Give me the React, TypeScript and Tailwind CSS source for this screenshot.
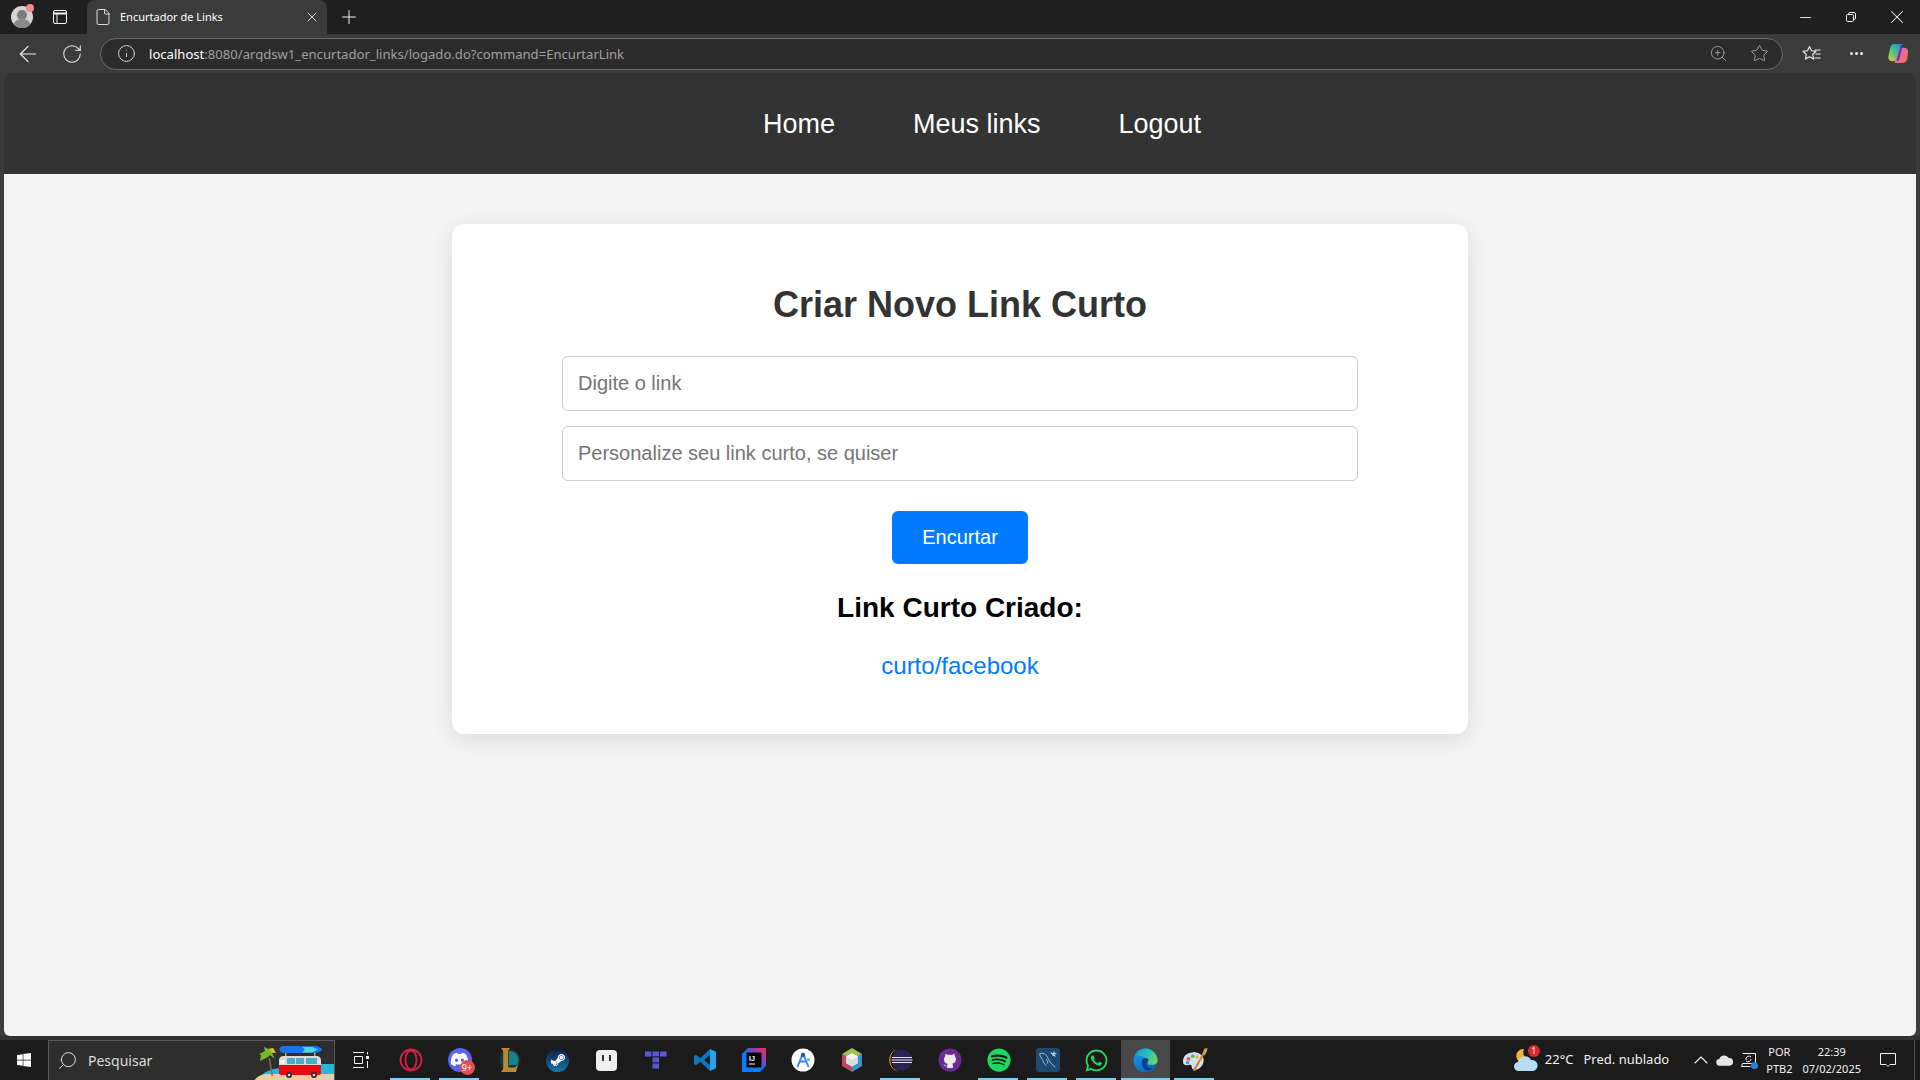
import { ArrowLeft, ChevronUp, File, Info, Minus, Plus, RotateCw, Search, Star, X, ZoomIn } from "lucide-react";
import { FaDiscord, FaSpotify, FaSteamSymbol, FaWhatsapp, FaWindows } from "react-icons/fa";

function Avatar() {
  return (
    <div className="relative h-[22px] w-[22px]">
      <svg viewBox="0 0 22 22" className="h-[22px] w-[22px]">
        <circle cx="11" cy="11" r="11" fill="#d4d4d4" />
        <circle cx="11" cy="9" r="5" fill="#7d7d7d" />
        <path d="M2.5 18c2-4 5-5 8.500-5s6.500 1 8.500 5a11 11 0 0 1-17 0z" fill="#8a8a8a" />
      </svg>
      <span className="absolute -right-[1px] -top-[2px] h-[8px] w-[8px] rounded-full bg-[#f28b8b]" />
    </div>
  );
}

function TabsIcon() {
  return (
    <svg viewBox="0 0 14 14" className="h-[14px] w-[14px]" fill="none" stroke="#f2f2f2" strokeWidth="1">
      <rect x="0.5" y="0.5" width="13" height="13" rx="1.5" />
      <path d="M0.5 3.500h13" strokeWidth="2" />
      <path d="M4 4v9.500" />
    </svg>
  );
}

function RestoreIcon() {
  return (
    <svg viewBox="0 0 10 10" className="h-[10px] w-[10px]" fill="none" stroke="#f2f2f2" strokeWidth="1">
      <rect x="0.5" y="2.500" width="7" height="7" rx="1.2" />
      <path d="M2.500 2.500V1.800c0-.7.5-1.300 1.300-1.300h4.400c.7 0 1.300.6 1.300 1.300v4.400c0 .7-.6 1.300-1.300 1.300h-.7" />
    </svg>
  );
}

function FavoritesIcon() {
  return (
    <svg viewBox="0 0 20 18" className="h-[18px] w-[20px]" fill="none" stroke="#f2f2f2" strokeWidth="1.100" strokeLinejoin="round">
      <path d="M7.500 1.500l2 4.300 4.500.6-3.300 3.100.9 4.600-4.100-2.300-4 2.300.8-4.600L1 6.400l4.500-.6z" />
      <path d="M12.500 5h6M13.500 9h5M12.500 13h6" />
    </svg>
  );
}

function CopilotIcon() {
  return (
    <svg viewBox="0 0 24 24" className="h-[23px] w-[23px]">
      <defs>
        <linearGradient id="copA" x1="0" y1="1" x2="1" y2="0">
          <stop offset="0" stopColor="#f5c13b" />
          <stop offset="0.5" stopColor="#3fc28d" />
          <stop offset="1" stopColor="#1f7fe0" />
        </linearGradient>
        <linearGradient id="copB" x1="0" y1="0" x2="1" y2="1">
          <stop offset="0" stopColor="#c665e0" />
          <stop offset="0.5" stopColor="#f0689a" />
          <stop offset="1" stopColor="#f4743c" />
        </linearGradient>
      </defs>
      <path d="M8 2h8l-4 18H6c-3 0-5-2-4.500-5L3 7c.5-3 2.500-5 5-5z" fill="url(#copA)" />
      <path d="M12 6h6c2.500 0 4 2 4 4.500l-.8 6.500c-.4 3-2.700 5-5.200 5H8l4-16z" fill="url(#copB)" />
      <path d="M14 3.500h2.500l-4 16H10z" fill="#1a3f8f" opacity="0.75" />
    </svg>
  );
}

function Opera() {
  return (
    <svg viewBox="0 0 24 24" className="h-[24px] w-[24px]" fill="none" stroke="#d4224a" strokeWidth="1.800">
      <circle cx="12" cy="12" r="10.500" />
      <ellipse cx="12" cy="12" rx="5.500" ry="9.500" />
    </svg>
  );
}

function Discord() {
  return (
    <div className="relative h-[24px] w-[24px] rounded-full bg-[#5865f2]">
      <FaDiscord className="absolute left-[2px] top-[2px] h-[19px] w-[19px] text-white" />
      <span className="absolute -bottom-[3px] -right-[3px] flex h-[15px] w-[15px] items-center justify-center rounded-full bg-[#e25050] font-['Noto_Sans',sans-serif] text-[9px] leading-none text-white">
        9+
      </span>
    </div>
  );
}

function Lol() {
  return (
    <svg viewBox="0 0 24 26" className="h-[26px] w-[24px]">
      <circle cx="13" cy="13" r="10.500" fill="#0b3a44" stroke="#2a2a1c" strokeWidth="1" />
      <path d="M12 4a9 9 0 0 1 8 14h-8z" fill="#1b7e88" />
      <path d="M4 1h9l-1.800 2.500v17h6.500l3.300-2.500-2 7H4l2.200-3V4z" fill="#b98a32" />
    </svg>
  );
}

function Steam() {
  return (
    <div className="flex h-[23px] w-[23px] items-center justify-center rounded-full bg-gradient-to-b from-[#0d1f45] to-[#1177b0]">
      <FaSteamSymbol className="h-[16px] w-[16px] text-white" />
    </div>
  );
}

function Pixel() {
  return (
    <div className="flex h-[21px] w-[21px] items-start justify-center gap-[5px] rounded-[4px] bg-[#f0f0f0] pt-[5px]">
      <span className="h-[6px] w-[2px] bg-[#333]" />
      <span className="h-[6px] w-[2px] bg-[#333]" />
    </div>
  );
}

function Tetris() {
  return (
    <svg viewBox="0 0 24 24" className="h-[24px] w-[24px]" fill="#5b57c9" stroke="#15132b" strokeWidth="0.800">
      <rect x="0.500" y="3" width="7.500" height="6" />
      <rect x="8" y="3" width="7.500" height="6" />
      <rect x="15.500" y="3" width="7.500" height="6" />
      <rect x="8" y="9" width="7.500" height="6" />
      <rect x="8" y="15" width="7.500" height="6" />
    </svg>
  );
}

function VsCode() {
  return (
    <svg viewBox="0 0 24 24" className="h-[24px] w-[24px]">
      <path d="M17 1l6 2.800v16.400L17 23z" fill="#24a2ee" />
      <path d="M17 1L7.500 10.300 3 6.800 1 8v8l2 1.200 4.500-3.500L17 23v-6l-6-5 6-5z" fill="#0a78c4" />
    </svg>
  );
}

function Idea() {
  return (
    <svg viewBox="0 0 24 24" className="h-[24px] w-[24px]">
      <defs>
        <linearGradient id="ijBg" x1="0" y1="1" x2="1" y2="0">
          <stop offset="0.450" stopColor="#087cfa" />
          <stop offset="0.700" stopColor="#8a3fb8" />
          <stop offset="1" stopColor="#fe2857" />
        </linearGradient>
      </defs>
      <path d="M6 0h18v18l-6 6H0V6z" fill="url(#ijBg)" />
      <rect x="4.500" y="4.500" width="15" height="15" fill="#000" />
      <text x="7" y="12.500" fontSize="7" fontWeight="700" fontFamily="Liberation Sans, sans-serif" fill="#fff">IJ</text>
      <rect x="7" y="15.500" width="6" height="1" fill="#fff" />
    </svg>
  );
}

function AndroidStudio() {
  return (
    <svg viewBox="0 0 24 24" className="h-[24px] w-[24px]">
      <circle cx="12" cy="12" r="11.500" fill="#fff" />
      <path d="M12 5l-5.500 14M12 5l5.500 14M8 13.500h8" fill="none" stroke="#4285f4" strokeWidth="2" />
      <circle cx="12" cy="7" r="2.200" fill="#1a56c4" />
      <circle cx="17.500" cy="11.500" r="1.500" fill="#3ddc84" />
    </svg>
  );
}

function NetBeans() {
  return (
    <svg viewBox="0 0 24 24" className="h-[24px] w-[24px]">
      <path d="M12 0l10 6-10 6-10-6z" fill="#a3c14a" />
      <path d="M2 6l10 6v12L2 18z" fill="#c04a60" />
      <path d="M22 6l-10 6v12l10-6z" fill="#3d8fd0" />
      <path d="M12 5l6 3.500v6.500l-6 3.500-6-3.500V8.500z" fill="#f4f4f4" />
      <path d="M6 8.500l6 3.500 6-3.500v6.500l-6 3.500-6-3.500z" fill="#dcdcdc" />
    </svg>
  );
}

function Eclipse() {
  return (
    <svg viewBox="0 0 24 24" className="h-[24px] w-[24px]">
      <path d="M9 0.800a11.500 11.500 0 0 0 0 22.400A12 12 0 0 1 9 0.800z" fill="#f7941e" />
      <circle cx="13" cy="12" r="10.500" fill="#2c2255" />
      <path d="M3 9.500h20M2.500 12h21M3 14.500h20" stroke="#e8e6f2" strokeWidth="1.200" />
    </svg>
  );
}

function GitHub() {
  return (
    <svg viewBox="0 0 24 24" className="h-[24px] w-[24px]">
      <circle cx="12" cy="12" r="11.500" fill="#6a2c91" />
      <path
        d="M7.600 5.600l2.400 1.300a8 8 0 0 1 4 0l2.400-1.300.6 3c.8 1 1.100 2 1 3.100-.2 2.400-1.800 3.600-3.800 3.900.5.500.7 1.100.7 1.800V20h-5.800v-1.800c-1.900.4-2.900-.3-3.600-1.900.5 0 1.300.5 1.700 1.100.5.500 1.100.5 1.900.3 0-.7.200-1.300.7-1.900-2-.3-3.600-1.500-3.800-3.900-.1-1.100.2-2.100 1-3.100z"
        fill="#ececec"
      />
    </svg>
  );
}

function MySql() {
  return (
    <div className="flex h-[24px] w-[24px] items-center justify-center rounded-[3px] bg-[#1f4a70]">
      <svg viewBox="0 0 24 24" className="h-[22px] w-[22px]" fill="none" stroke="#d5e0ea" strokeWidth="0.800">
        <path d="M3 5c3-1 6 0 8 3 1 2 1.500 4 3 6 1.500 2 3.500 3.500 6 6" />
        <path d="M3 5c0 3 1.500 5 3 6.500.8 1 .5 2.500 1.500 4 .6 1 2 1.500 3 3" />
        <path d="M10 11c1.500 1.500 1.800 3 1.500 5" />
        <path d="M15 4l5 4M19 3l-2 4M21 5l-4 1" strokeWidth="1.200" />
      </svg>
    </div>
  );
}

function Edge() {
  return (
    <svg viewBox="0 0 24 24" className="h-[25px] w-[25px]">
      <defs>
        <linearGradient id="edgeTop" x1="0" y1="0.200" x2="1" y2="0.700">
          <stop offset="0" stopColor="#1a9de0" />
          <stop offset="0.550" stopColor="#2ec4b0" />
          <stop offset="1" stopColor="#6bdb4f" />
        </linearGradient>
        <linearGradient id="edgeLow" x1="0" y1="0" x2="0.700" y2="1">
          <stop offset="0" stopColor="#14a0e8" />
          <stop offset="1" stopColor="#0b62bd" />
        </linearGradient>
      </defs>
      <circle cx="12" cy="12" r="11.500" fill="url(#edgeLow)" />
      <path d="M2 7C4 2.500 8 .5 12 .5 18.500.5 23.500 6 23.500 12c0 2-1 3.500-3.500 4-2.500.4-5 0-6-1 1.200-1.500.8-4-1.500-5.500C9 7.500 4.500 7.500 2 7z" fill="url(#edgeTop)" />
      <path d="M8.500 13c0-2 1.500-3.500 4-3.500 1.500 0 2.500 1 2.500 2.500-1 .5-2 1.500-2 3 0 2.500 2.500 4.500 6 4.500-1.500 1.500-3 2-5 2-3.500 0-5.500-4-5.500-8.500z" fill="#0d3f8e" />
    </svg>
  );
}

function Palette() {
  return (
    <svg viewBox="0 0 24 24" className="h-[26px] w-[26px]">
      <path d="M10 5C4 5 0.500 9 1 14c.3 3 3 3 5 2.500 2-.5 3 0 3 2 0 2 2 3 4 2.500 4-1 7-4.500 7-9 0-4-4-7.500-10-7.500z" fill="#cfe3f2" />
      <circle cx="6" cy="11" r="1.800" fill="#e25b5b" />
      <circle cx="10" cy="8.500" r="1.700" fill="#5db85b" />
      <circle cx="14" cy="9" r="1.500" fill="#e8a93a" />
      <circle cx="5" cy="14.500" r="1.500" fill="#4a90d9" />
      <path d="M11 22L20.500 5" stroke="#d9822b" strokeWidth="2" />
      <path d="M19 6l1.500-4.500L23.500 1l-.5 3-2 3.500z" fill="#c9a15a" />
    </svg>
  );
}

function BeachVan() {
  return (
    <svg viewBox="0 0 80 40" className="h-[40px] w-[80px] shrink-0">
      <rect x="60" y="23" width="20" height="12" fill="#24b6dc" />
      <path d="M8 34c4-4 10-6 18-7v8H8z" fill="#24b6dc" />
      <path d="M0 40c3-5 8-7 14-7h66v7z" fill="#e6cfa0" />
      <path d="M16 17l3 18h-1.500L14.500 17z" fill="#8a6a4a" />
      <path d="M14 16L6 20l1-6-2-1 6-3-1-4 5 2 4-1 3 5-4 0 3 6-5-4z" fill="#76b82a" />
      <path d="M15 8l4-1 3 5-5-1z" fill="#e3b42c" />
      <path d="M30 5h16v7H30c-3 0-4.500-1.500-4.500-3.500S27 5 30 5z" fill="#1976e0" />
      <path d="M46 5h14c4 0 8 2 8 3.500S64 12 60 12H46z" fill="#1976e0" />
      <path d="M48 6h10l6 2.500-6 3H48l3-3z" fill="#54d6d2" />
      <rect x="31" y="12" width="1.500" height="3" fill="#a8a8a8" />
      <rect x="60" y="12" width="1.500" height="3" fill="#a8a8a8" />
      <path d="M29 15h34c2 0 4 2 4 4v6H25v-6c0-2 2-4 4-4z" fill="#dcdcdc" />
      <path d="M25 24h42v8c0 1-1 2-2 2H27c-1 0-2-1-2-2z" fill="#e30d13" />
      <rect x="26" y="19" width="5" height="4" fill="#f0f0f0" />
      <rect x="33" y="17" width="8" height="6" fill="#49afc9" />
      <rect x="42" y="17" width="8" height="6" fill="#49afc9" />
      <rect x="52" y="17" width="11" height="6" fill="#49afc9" />
      <circle cx="35" cy="34" r="3" fill="#2a2a2a" />
      <circle cx="35" cy="34" r="1.300" fill="#ddd" />
      <circle cx="60" cy="34" r="3" fill="#2a2a2a" />
      <circle cx="60" cy="34" r="1.300" fill="#ddd" />
    </svg>
  );
}

function TaskView() {
  return (
    <svg viewBox="0 0 16 16" className="h-[16px] w-[16px]" fill="none" stroke="#f2f2f2" strokeWidth="1">
      <path d="M0 0.500h11M0 15.500h11M1.500 4.500h8v7h-8z" />
      <rect x="13" y="4" width="3" height="3" fill="#f2f2f2" stroke="none" />
      <path d="M14.500 0v2.500M14.500 9v7" />
    </svg>
  );
}

function Weather() {
  return (
    <div className="relative h-[26px] w-[26px]">
      <svg viewBox="0 0 26 26" className="h-[26px] w-[26px]">
        <path d="M11 2a7 7 0 1 0 5 11 8 8 0 0 1-5-11z" fill="#f0b13e" />
        <path d="M6 24a4.500 4.500 0 0 1-1-9 7 7 0 0 1 13-2 5.500 5.500 0 0 1 2 11z" fill="#b9dcf5" />
      </svg>
      <span className="absolute -right-[1px] -top-[2px] flex h-[12px] w-[12px] items-center justify-center rounded-full bg-[#d92b2b] text-[8px] leading-none text-white">
        1
      </span>
    </div>
  );
}

function OneDrive() {
  return (
    <svg viewBox="0 0 18 12" className="h-[12px] w-[17px]" fill="#e6e6e6">
      <path d="M4 12a3.500 3.500 0 0 1-.5-7A5.500 5.500 0 0 1 13.500 4 4 4 0 0 1 14.500 12z" />
    </svg>
  );
}

function NetworkTray() {
  return (
    <div className="relative h-[16px] w-[16px]">
      <svg viewBox="0 0 16 16" className="h-[16px] w-[16px]" fill="none" stroke="#f2f2f2" strokeWidth="1">
        <path d="M2.500 1.500h13v10h-13l-1 3h9" />
        <path d="M6 8a3 3 0 0 1 5-3M11 7a3 3 0 0 1-5 2" />
      </svg>
      <span className="absolute -bottom-[1px] -right-[2px] h-[7px] w-[7px] rounded-full bg-[#2a7fd6]" />
    </div>
  );
}

function NotificationIcon() {
  return (
    <svg viewBox="0 0 16 16" className="h-[16px] w-[16px]" fill="none" stroke="#f2f2f2" strokeWidth="1">
      <path d="M0.500 1.500h15v11H10l-2 2-2-2H0.500z" />
    </svg>
  );
}

function TaskItem({ children, running, active }: { children: React.ReactNode; running?: boolean; active?: boolean }) {
  return (
    <div className={`relative flex h-[40px] w-[49px] items-center justify-center ${active ? "bg-[#484848]" : ""}`}>
      {children}
      {running && (
        <span className={`absolute bottom-0 h-[2px] bg-[#76d0f5] ${active ? "left-0 w-full" : "left-[4px] w-[40px]"}`} />
      )}
    </div>
  );
}

export default function App() {
  return (
    <div className="flex h-screen w-full flex-col overflow-hidden bg-[#3b3b3b] font-['Liberation_Sans',Arial,sans-serif]">
      <div className="flex h-[34px] items-end bg-[#1f1f1f] font-['Noto_Sans',sans-serif]">
        <div className="flex h-[34px] w-[44px] items-center justify-center">
          <Avatar />
        </div>
        <div className="ml-[1px] flex h-[34px] w-[30px] items-center justify-center">
          <TabsIcon />
        </div>
        <div className="ml-[12px] flex h-[34px] w-[240px] items-center rounded-t-[8px] bg-[#3b3b3b] pl-[7px] pr-[7px] text-white">
          <File className="h-[18px] w-[18px] text-[#f0f0f0]" strokeWidth={1.2} />
          <span className="ml-[8px] flex-1 text-[11px]">Encurtador de Links</span>
          <X className="h-[16px] w-[16px] text-[#e6e6e6]" strokeWidth={1.3} />
        </div>
        <div className="ml-[4px] flex h-[34px] w-[36px] items-center justify-center">
          <Plus className="h-[22px] w-[22px] text-[#f0f0f0]" strokeWidth={1.1} />
        </div>
        <div className="ml-auto flex h-[34px] items-center">
          <div className="flex w-[46px] justify-center">
            <Minus className="h-[17px] w-[17px] text-[#f2f2f2]" strokeWidth={1.3} />
          </div>
          <div className="flex w-[46px] justify-center">
            <RestoreIcon />
          </div>
          <div className="flex w-[46px] justify-center">
            <X className="h-[22px] w-[22px] text-[#f2f2f2]" strokeWidth={1.1} />
          </div>
        </div>
      </div>

      <div className="flex h-[39px] items-center bg-[#3b3b3b] font-['Noto_Sans',sans-serif]">
        <div className="flex w-[56px] justify-center">
          <ArrowLeft className="h-[26px] w-[26px] text-[#efefef]" strokeWidth={1.1} />
        </div>
        <div className="flex w-[32px] justify-center">
          <RotateCw className="h-[22px] w-[22px] text-[#efefef]" strokeWidth={1.1} />
        </div>
        <div className="ml-[12px] flex h-[32px] flex-1 items-center rounded-full border border-[#6b6b6b] bg-[#2b2b2b] pl-[16px] pr-[13px]">
          <Info className="h-[19px] w-[19px] text-[#d8d8d8]" strokeWidth={1.2} />
          <span className="ml-[13px] flex-1 pt-[2px] text-[13.1px] text-[#a0a0a0]">
            <span className="text-white">localhost</span>:8080/arqdsw1_encurtador_links/logado.do?command=EncurtarLink
          </span>
          <ZoomIn className="h-[19px] w-[19px] text-[#a0a0a0]" strokeWidth={1.2} />
          <Star className="ml-[22px] h-[19px] w-[19px] text-[#a0a0a0]" strokeWidth={1.2} />
        </div>
        <div className="ml-[16px] flex w-[26px] justify-center">
          <FavoritesIcon />
        </div>
        <div className="ml-[18px] flex w-[26px] items-center justify-center gap-[2px]">
          <span className="h-[3px] w-[3px] rounded-full bg-[#f2f2f2]" />
          <span className="h-[3px] w-[3px] rounded-full bg-[#f2f2f2]" />
          <span className="h-[3px] w-[3px] rounded-full bg-[#f2f2f2]" />
        </div>
        <div className="ml-[17px] mr-[10px] flex w-[24px] justify-center">
          <CopilotIcon />
        </div>
      </div>

      <div className="flex min-h-0 flex-1 flex-col overflow-hidden rounded-t-[6px] px-[4px]">
        <nav className="flex h-[101px] shrink-0 items-center justify-center gap-[78px] rounded-t-[6px] bg-[#333333] pl-[44px] pt-[2px] text-[27px] text-white">
          <a>Home</a>
          <a>Meus links</a>
          <a>Logout</a>
        </nav>
        <main className="flex-1 rounded-b-[6px] bg-[#f4f4f4] pt-[50px]">
          <div className="mx-auto flex h-[510px] w-[1016px] flex-col items-center rounded-[12px] bg-white px-[110px] pt-[59px] shadow-[0_5px_25px_rgba(0,0,0,0.1)]">
            <h2 className="text-[36px] font-bold leading-[44px] text-[#333333]">Criar Novo Link Curto</h2>
            <input
              className="mt-[29px] h-[55px] w-full rounded-[6px] border border-[#cccccc] px-[15px] text-[20px] placeholder:text-[#757575]"
              placeholder="Digite o link"
            />
            <input
              className="mt-[15px] h-[55px] w-full rounded-[6px] border border-[#cccccc] px-[15px] text-[20px] placeholder:text-[#757575]"
              placeholder="Personalize seu link curto, se quiser"
            />
            <button className="mt-[30px] h-[53px] w-[136px] rounded-[6px] bg-[#007bff] pb-[2px] text-[20px] text-white">
              Encurtar
            </button>
            <h3 className="mt-[28px] text-[28px] font-bold leading-[32px] text-black">Link Curto Criado:</h3>
            <a className="mt-[28px] text-[24px] leading-[28px] text-[#007bff]">curto/facebook</a>
          </div>
        </main>
      </div>

      <div className="h-[4px] shrink-0 bg-[#333333]" />

      <div className="flex h-[40px] shrink-0 items-center bg-[#1b1b1b] font-['Noto_Sans',sans-serif] text-[#f2f2f2]">
        <div className="flex h-full w-[48px] items-center justify-center">
          <FaWindows className="h-[16px] w-[16px] text-white" />
        </div>
        <div className="flex h-full w-[287px] items-center overflow-hidden border border-b-0 border-[#5a5a5a] bg-[#2e2e2e] pl-[8px]">
          <Search className="h-[21px] w-[21px] -scale-x-100 text-[#e8e8e8]" strokeWidth={1.1} />
          <span className="ml-[10px] flex-1 text-[14px] text-[#dcdcdc]">Pesquisar</span>
          <BeachVan />
        </div>
        <div className="flex h-full w-[51px] items-center justify-center">
          <TaskView />
        </div>
        <TaskItem running><Opera /></TaskItem>
        <TaskItem running><Discord /></TaskItem>
        <TaskItem><Lol /></TaskItem>
        <TaskItem><Steam /></TaskItem>
        <TaskItem><Pixel /></TaskItem>
        <TaskItem><Tetris /></TaskItem>
        <TaskItem><VsCode /></TaskItem>
        <TaskItem><Idea /></TaskItem>
        <TaskItem><AndroidStudio /></TaskItem>
        <TaskItem><NetBeans /></TaskItem>
        <TaskItem running><Eclipse /></TaskItem>
        <TaskItem><GitHub /></TaskItem>
        <TaskItem running><FaSpotify className="h-[24px] w-[24px] text-[#1ed760]" /></TaskItem>
        <TaskItem running><MySql /></TaskItem>
        <TaskItem running><FaWhatsapp className="h-[25px] w-[25px] text-[#25d366]" /></TaskItem>
        <TaskItem running active><Edge /></TaskItem>
        <TaskItem running><Palette /></TaskItem>

        <div className="ml-auto flex h-full items-center pr-[5px]">
          <Weather />
          <span className="ml-[6px] text-[13px]">22°C</span>
          <span className="ml-[10px] text-[13px]">Pred. nublado</span>
          <ChevronUp className="ml-[20px] h-[24px] w-[24px]" strokeWidth={1.1} />
          <span className="ml-[3px]"><OneDrive /></span>
          <span className="ml-[7px]"><NetworkTray /></span>
          <div className="ml-[10px] flex flex-col items-center text-[11px] leading-[17px]">
            <span>POR</span>
            <span>PTB2</span>
          </div>
          <div className="ml-[10px] flex flex-col items-center text-[11px] leading-[17px]">
            <span>22:39</span>
            <span>07/02/2025</span>
          </div>
          <span className="ml-[19px]"><NotificationIcon /></span>
          <span className="ml-[18px] h-full w-[1px] bg-[#555555]" />
        </div>
      </div>
    </div>
  );
}
